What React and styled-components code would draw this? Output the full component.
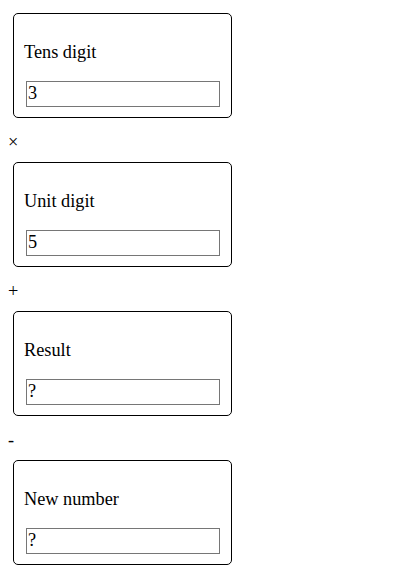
import React from "react"
import styled, { createGlobalStyle } from "styled-components"

const Global = createGlobalStyle`
  body {
    margin: 8px;
    font-family: "Liberation Serif", "Times New Roman", serif;
    font-size: 18.3px;
    color: #000;
    background: #fff;
  }
`

const Card = styled.div`
  width: 197px;
  margin: 5px;
  padding: 10px;
  border: 1px solid #000;
  border-radius: 5px;
  display: flex;
  flex-direction: column;
`

const Label = styled.p`
  margin: 19px 0;
  line-height: 19px;
`

const Field = styled.input`
  box-sizing: border-box;
  width: 194px;
  height: 26px;
  margin: 0 0 0 2px;
  padding: 1px 1px 2px;
  border: 1px solid #767676;
  font: inherit;
  color: #000;
  background: #fff;
`

const Operator = styled.div`
  padding: 10px 0 5px;
  line-height: 19px;
`

const rows = [
  { label: "Tens digit", value: "3", op: "×" },
  { label: "Unit digit", value: "5", op: "+" },
  { label: "Result", value: "?", op: "-" },
  { label: "New number", value: "?" },
]

export default function App() {
  return (
    <>
      <Global />
      {rows.map((r) => (
        <React.Fragment key={r.label}>
          <Card>
            <Label>{r.label}</Label>
            <Field defaultValue={r.value} readOnly />
          </Card>
          {r.op && <Operator>{r.op}</Operator>}
        </React.Fragment>
      ))}
    </>
  )
}
